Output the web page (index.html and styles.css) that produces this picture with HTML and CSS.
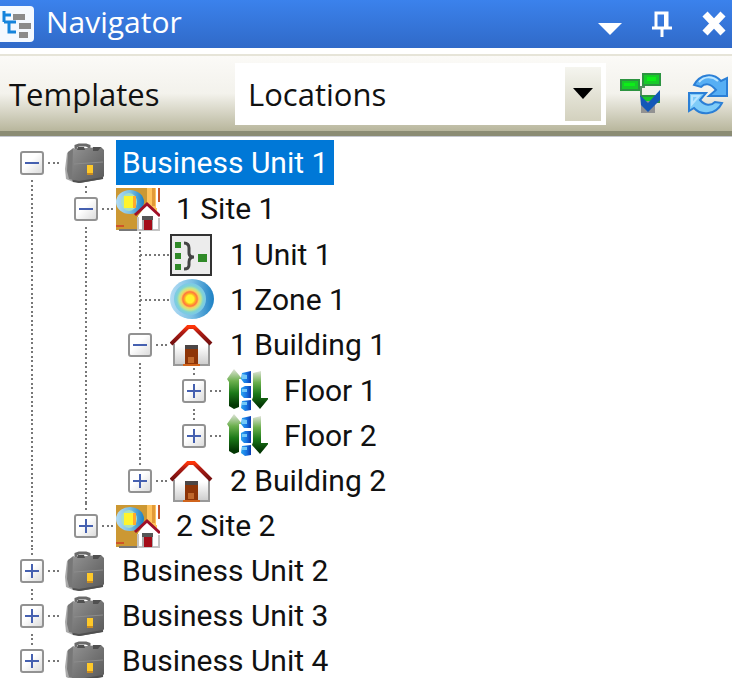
FILE: index.html
```html
<!DOCTYPE html>
<html lang="en">
<head>
  <meta charset="UTF-8">
  <meta name="viewport" content="width=device-width, initial-scale=1.0">
  <title>Navigator</title>
  <link rel="stylesheet" href="styles.css">
</head>
<body>
  <!-- Shared icons -->
  <svg class="icon-defs" aria-hidden="true">
    <defs>
      <linearGradient id="caseFill" x1="0" y1="0" x2="1" y2="1">
        <stop offset="0" stop-color="#939393"/>
        <stop offset="0.5" stop-color="#747474"/>
        <stop offset="1" stop-color="#585858"/>
      </linearGradient>
      <linearGradient id="wallFill" x1="0" y1="0" x2="0" y2="1">
        <stop offset="0.5" stop-color="#fff"/>
        <stop offset="1" stop-color="#ccc"/>
      </linearGradient>
      <linearGradient id="roofFill" x1="0" y1="0" x2="0" y2="1">
        <stop offset="0" stop-color="#ff3508"/>
        <stop offset="0.3" stop-color="#b01c14"/>
        <stop offset="1" stop-color="#701010"/>
      </linearGradient>
      <linearGradient id="arrowFill" x1="0" y1="0" x2="0" y2="1">
        <stop offset="0" stop-color="#dfe3d8"/>
        <stop offset="0.3" stop-color="#6cb04e"/>
        <stop offset="0.6" stop-color="#1c7a18"/>
        <stop offset="0.9" stop-color="#043804"/>
      </linearGradient>
      <linearGradient id="stepFill" x1="0" y1="0" x2="1" y2="0">
        <stop offset="0" stop-color="#2aa4f0"/>
        <stop offset="0.5" stop-color="#1878e4"/>
        <stop offset="1" stop-color="#0a3bb0"/>
      </linearGradient>
      <radialGradient id="zoneFill">
        <stop offset="0.24" stop-color="#fff42c"/>
        <stop offset="0.34" stop-color="#ffb022"/>
        <stop offset="0.45" stop-color="#ff7440"/>
        <stop offset="0.55" stop-color="#f8d25c"/>
        <stop offset="0.68" stop-color="#c3e68c"/>
        <stop offset="0.82" stop-color="#7fd3d4"/>
        <stop offset="1" stop-color="#7cc8e8"/>
      </radialGradient>
      <linearGradient id="zoneRing" x1="0" y1="0" x2="1" y2="0">
        <stop offset="0" stop-color="#b4dcf4"/>
        <stop offset="0.5" stop-color="#7cc0e4"/>
        <stop offset="1" stop-color="#1c80c4"/>
      </linearGradient>
    </defs>

    <symbol id="unit-case" viewBox="0 0 44 44">
      <path d="M14 9V5l3-1h7l3 1v4" fill="none" stroke="#6a6a6a" stroke-width="3"/>
      <path d="M5 12l6-5v34l-7-3-1-10z" fill="#aaa"/>
      <path d="M6 11l6-4-1 32-4-1-2-8z" fill="#777"/>
      <path d="M11 8l28-2 3 3v26l-2 3-22 4-8-2z" fill="url(#caseFill)"/>
      <path d="M16 6h6l1 3h-8zM31 6h8l-3 4h-5z" fill="#505050"/>
      <path d="M12 23l29-2" stroke="#8c8c8c"/>
      <path d="M11 40l6 1 24-4" fill="none" stroke="#505050" stroke-width="2"/>
      <path d="M25 24h6v8h-6z" fill="#ffc928"/>
      <path d="M25 32h6v2h-6z" fill="#c78a24"/>
    </symbol>

    <symbol id="site" viewBox="0 0 44 44">
      <path d="M0 1h31v32L22 43H0z" fill="#cc9833"/>
      <path d="M31 1h10v24H31z" fill="#ffc35c"/>
      <path d="M36 1h3v18h-3z" fill="#e29a38"/>
      <path d="M40 1h2v20h-2z" fill="#fff"/>
      <path d="M42 1h2v14h-2z" fill="#c4562c"/>
      <path d="M0 38h8v2H0z" fill="#cf5428"/>
      <ellipse cx="14" cy="15" rx="14" ry="12" fill="url(#zoneRing)"/>
      <ellipse cx="13" cy="15" rx="8" ry="9" fill="#a9dfc0"/>
      <path d="M8 9h9v12H8z" fill="#fff42c"/>
      <path d="M17 9h3v12h-3z" fill="#ffa92e"/>
      <path d="M31 17l13 13v13H22V29z" fill="#fff"/>
      <path d="M19 28l12-11 13 12" fill="none" stroke="#a01028" stroke-width="3"/>
      <path d="M22 30v13h21V31" fill="none" stroke="#c4c4c4" stroke-width="2"/>
      <path d="M26 29h11v4H26z" fill="#555"/>
      <path d="M26 33h11v10H26z" fill="#aaa"/>
      <path d="M28 33h8v10h-8z" fill="#a40c18"/>
      <path d="M3 43h18" stroke="#777" stroke-width="2"/>
    </symbol>

    <symbol id="unit" viewBox="0 0 44 44">
      <path d="M1 2h40v40H1z" fill="#ececec" stroke="#333" stroke-width="2"/>
      <path d="M5 9h6v6H5zM5 20h6v6H5zM5 31h6v6H5zM28 21h9v8h-9z" fill="#308a28"/>
      <path d="M14 10q5 0 5 5v5q0 4 5 4-5 0-5 5v3q0 4-5 4" fill="none" stroke="#444" stroke-width="3"/>
    </symbol>

    <symbol id="zone" viewBox="0 0 44 44">
      <ellipse cx="22" cy="21" rx="22" ry="20" fill="url(#zoneRing)"/>
      <circle cx="20" cy="21" r="16" fill="url(#zoneFill)"/>
    </symbol>

    <symbol id="building" viewBox="0 0 44 44">
      <path d="M21 4L4 20v22h35V20z" fill="url(#wallFill)"/>
      <path d="M4 21v21h35V21" fill="none" stroke="#999" stroke-width="2"/>
      <path d="M1 21L18 4h6l17 17" fill="none" stroke="url(#roofFill)" stroke-width="4"/>
      <path d="M15 22h13v4H15z" fill="#4c4646"/>
      <path d="M15 26h13v17H15z" fill="#8e3508"/>
      <path d="M18 34h6v6h-6z" fill="#c0682c"/>
      <path d="M13 41h17v2H13z" fill="#d0641c"/>
    </symbol>

    <symbol id="floor" viewBox="0 0 44 44">
      <path d="M10 0l5 6 3 4h-3v28l-5 2-5-3V13l-2-3z" fill="url(#arrowFill)"/>
      <path d="M29 4l8-2v27h8l-9 11-8-9 1-3z" fill="url(#arrowFill)"/>
      <path d="M18 4l9-2v12h-7l-3-4zM17 19l4-2h6v12h-7l-3-3zM18 32l9-1v10l-6 1-4-3z" fill="url(#stepFill)"/>
      <path d="M18 5l5 1v4h-5zM18 33h5v3h-5zM18 20h5v3h-5z" fill="#72c8f8"/>
    </symbol>
  </svg>

  <!-- Title bar -->
  <header class="titlebar">
    <svg class="title-icon" viewBox="0 0 35 38" aria-hidden="true">
      <rect x="-3" y="1" width="37" height="36" rx="4" fill="#f4f9ff"/>
      <path d="M4 6v11M3 10h8M4 17h12M9 17v10h7" fill="none" stroke="#1684dc" stroke-width="3"/>
      <path d="M13 9h12v6H13zM19 18h12v6H19zM19 27h9v6h-9z" fill="#8b8b8b"/>
    </svg>
    <h1>Navigator</h1>
    <div class="window-buttons">
      <button type="button" aria-label="Menu">
        <svg viewBox="0 0 28 28" aria-hidden="true"><path d="M2 13h24L14 25z" fill="#fff"/></svg>
      </button>
      <button type="button" aria-label="Auto hide">
        <svg viewBox="0 0 28 28" aria-hidden="true"><path d="M8 17V3h11v14M4 18h20M14 18v9" fill="none" stroke="#fff" stroke-width="3"/><path d="M16 3h4v14h-4z" fill="#fff"/></svg>
      </button>
      <button type="button" aria-label="Close">
        <svg viewBox="0 0 28 28" aria-hidden="true"><path d="M5 4l18 19M23 4L5 23" fill="none" stroke="#fff" stroke-width="7"/></svg>
      </button>
    </div>
  </header>

  <!-- Toolbar -->
  <div class="toolbar">
    <label for="templates">Templates</label>
    <div class="select-box">
      <select id="templates">
        <option>Locations</option>
      </select>
      <span class="select-arrow"></span>
    </div>
    <button type="button" class="tool" aria-label="Apply template">
      <svg viewBox="0 0 42 42" aria-hidden="true">
        <path d="M19 14h5V7M21 15v8h6" fill="none" stroke="#548c60" stroke-width="2"/>
        <path d="M1 7h18v10H1zM23 1h17v11H23zM22 23h17v6H22z" fill="#17cb28" stroke="#2c9440" stroke-width="2"/>
        <path d="M4 10h11v3H4zM27 4h9v4h-9z" fill="#0dee18"/>
        <path d="M21 28h14v12H21z" fill="#929292"/>
        <path d="M20 22l8 8 12-13v10L28 39l-7-7z" fill="#1358b8"/>
      </svg>
    </button>
    <button type="button" class="tool" aria-label="Refresh">
      <svg viewBox="0 0 42 42" aria-hidden="true">
        <path d="M7 12C13 1 26-1 34 8l6-3v18H22l7-6c-6-7-11-7-15-3z" fill="#57aff4" stroke="#2b7fd6" stroke-width="2"/>
        <path d="M35 30C29 42 14 43 7 35l-5 3V20h17l-6 7c5 6 11 6 15 2z" fill="#7fccf8" stroke="#2b7fd6" stroke-width="2"/>
        <path d="M12 9c5-6 13-6 19-1M5 23h7l-7 8z" fill="none" stroke="#b9e5ff" stroke-width="2"/>
      </svg>
    </button>
  </div>

  <!-- Location tree -->
  <ul class="tree">
    <li>
      <div class="row">
        <button type="button" class="toggle" aria-expanded="true" aria-label="Collapse Business Unit 1"></button>
        <span class="dots"></span>
        <svg class="icon"><use href="#unit-case"/></svg>
        <a href="#" class="selected">Business Unit 1</a>
      </div>
      <ul>
        <li>
          <div class="row">
            <button type="button" class="toggle" aria-expanded="true" aria-label="Collapse Site 1"></button>
            <span class="dots"></span>
            <svg class="icon"><use href="#site"/></svg>
            <a href="#">1 Site 1</a>
          </div>
          <ul>
            <li>
              <div class="row leaf">
                <span class="dots"></span>
                <svg class="icon"><use href="#unit"/></svg>
                <a href="#">1 Unit 1</a>
              </div>
            </li>
            <li>
              <div class="row leaf">
                <span class="dots"></span>
                <svg class="icon"><use href="#zone"/></svg>
                <a href="#">1 Zone 1</a>
              </div>
            </li>
            <li>
              <div class="row">
                <button type="button" class="toggle" aria-expanded="true" aria-label="Collapse Building 1"></button>
                <span class="dots"></span>
                <svg class="icon"><use href="#building"/></svg>
                <a href="#">1 Building 1</a>
              </div>
              <ul>
                <li>
                  <div class="row">
                    <button type="button" class="toggle" aria-expanded="false" aria-label="Expand Floor 1"></button>
                    <span class="dots"></span>
                    <svg class="icon"><use href="#floor"/></svg>
                    <a href="#">Floor 1</a>
                  </div>
                </li>
                <li>
                  <div class="row">
                    <button type="button" class="toggle" aria-expanded="false" aria-label="Expand Floor 2"></button>
                    <span class="dots"></span>
                    <svg class="icon"><use href="#floor"/></svg>
                    <a href="#">Floor 2</a>
                  </div>
                </li>
              </ul>
            </li>
            <li>
              <div class="row">
                <button type="button" class="toggle" aria-expanded="false" aria-label="Expand Building 2"></button>
                <span class="dots"></span>
                <svg class="icon"><use href="#building"/></svg>
                <a href="#">2 Building 2</a>
              </div>
            </li>
          </ul>
        </li>
        <li>
          <div class="row">
            <button type="button" class="toggle" aria-expanded="false" aria-label="Expand Site 2"></button>
            <span class="dots"></span>
            <svg class="icon"><use href="#site"/></svg>
            <a href="#">2 Site 2</a>
          </div>
        </li>
      </ul>
    </li>
    <li>
      <div class="row">
        <button type="button" class="toggle" aria-expanded="false" aria-label="Expand Business Unit 2"></button>
        <span class="dots"></span>
        <svg class="icon"><use href="#unit-case"/></svg>
        <a href="#">Business Unit 2</a>
      </div>
    </li>
    <li>
      <div class="row">
        <button type="button" class="toggle" aria-expanded="false" aria-label="Expand Business Unit 3"></button>
        <span class="dots"></span>
        <svg class="icon"><use href="#unit-case"/></svg>
        <a href="#">Business Unit 3</a>
      </div>
    </li>
    <li>
      <div class="row">
        <button type="button" class="toggle" aria-expanded="false" aria-label="Expand Business Unit 4"></button>
        <span class="dots"></span>
        <svg class="icon"><use href="#unit-case"/></svg>
        <a href="#">Business Unit 4</a>
      </div>
    </li>
  </ul>
</body>
</html>
```
FILE: styles.css
```css
* {
  box-sizing: border-box;
}

body {
  margin: 0;
  height: 100vh;
  overflow: hidden;
  display: flex;
  flex-direction: column;
  background: #fff;
  color: #111;
  font-family: "Open Sans", "Noto Sans", sans-serif;
}

button {
  padding: 0;
  border: none;
  background: none;
  cursor: pointer;
}

.icon-defs {
  position: absolute;
  width: 0;
  height: 0;
}

/* Title bar */
.titlebar {
  flex: none;
  display: flex;
  align-items: center;
  height: 48px;
  padding-right: 4px;
  background: linear-gradient(#3b82ec, #306ac8);
}

.title-icon {
  width: 35px;
  height: 38px;
}

.titlebar h1 {
  flex: 1;
  margin: 0 0 0 11px;
  padding-bottom: 4px;
  color: #fff;
  font-size: 30px;
  font-weight: normal;
  line-height: 44px;
}

.window-buttons {
  display: flex;
  gap: 24px;
}

.window-buttons svg {
  display: block;
  width: 28px;
  height: 28px;
}

/* Toolbar */
.toolbar {
  flex: none;
  display: flex;
  align-items: center;
  height: 82px;
  margin-top: 6px;
  padding: 0 3px 0 9px;
  border-top: 2px solid #e6e4d8;
  border-bottom: 5px solid #8b8c74;
  background: linear-gradient(#fbfaf7, #f3f2ec 50%, #b8b69c);
}

.toolbar label {
  flex: 0 0 226px;
  font-size: 31px;
}

.select-box {
  position: relative;
  flex: 1;
  margin-right: 14px;
}

.select-box select {
  display: block;
  width: 100%;
  height: 62px;
  padding: 0 50px 0 13px;
  border: none;
  border-radius: 0;
  appearance: none;
  background: #fff;
  color: #111;
  font-family: inherit;
  font-size: 31px;
}

.select-arrow {
  position: absolute;
  top: 4px;
  right: 5px;
  bottom: 4px;
  width: 36px;
  display: flex;
  align-items: center;
  justify-content: center;
  background: linear-gradient(#f5f5ef, #d3d1be);
  pointer-events: none;
}

.select-arrow::before {
  content: "";
  border: 10px solid transparent;
  border-top: 11px solid #000;
  border-bottom: none;
}

.tool {
  flex: none;
}

.tool + .tool {
  margin-left: 25px;
}

.tool svg {
  display: block;
  width: 42px;
  height: 42px;
}

/* Tree */
.tree {
  flex: 1;
  overflow: hidden;
  padding: 3px 0 0 20px;
  border-top: 1px solid #c5c8d0;
}

.tree,
.tree ul {
  margin: 0;
  list-style: none;
}

.tree ul {
  padding: 1px 0 0 54px;
}

/* dotted guide line that joins the items of one level */
.tree li {
  background: repeating-linear-gradient(#777 0 2px, transparent 2px 5px, #777 5px 7px, transparent 7px 9px) 11px 0 / 2px 100% no-repeat;
}

.tree ul > li:last-child {
  background-size: 2px 22px;
}

.tree > li:first-child {
  background-position: 11px 22px;
}

.row {
  display: flex;
  align-items: center;
  height: 45px;
}

.toggle {
  flex: none;
  display: grid;
  place-items: center;
  width: 24px;
  height: 24px;
  border: 2px solid #929292;
  border-radius: 3px;
  background: linear-gradient(135deg, #fff 40%, #dcdcdc);
  box-shadow: 0 0 0 3px #fff;
}

.toggle::before,
.toggle::after {
  content: "";
  grid-area: 1 / 1;
  width: 14px;
  height: 2px;
  background: #4560b0;
}

.toggle::after {
  width: 2px;
  height: 14px;
}

.toggle[aria-expanded="true"]::after {
  display: none;
}

.dots {
  flex: none;
  width: 14px;
  height: 2px;
  margin-left: 4px;
  background: repeating-linear-gradient(90deg, #777 0 2px, transparent 2px 5px, #777 5px 7px, transparent 7px 9px);
}

.leaf .dots {
  width: 30px;
  margin-left: 12px;
}

.icon {
  flex: none;
  width: 44px;
  height: 44px;
}

.row a {
  margin-left: 10px;
  padding: 0 6px;
  color: #111;
  font-family: Roboto, "Liberation Sans", sans-serif;
  font-size: 30px;
  line-height: 45px;
  text-decoration: none;
  white-space: nowrap;
}

.row a.selected {
  background: #0078d7;
  color: #fff;
}
```
